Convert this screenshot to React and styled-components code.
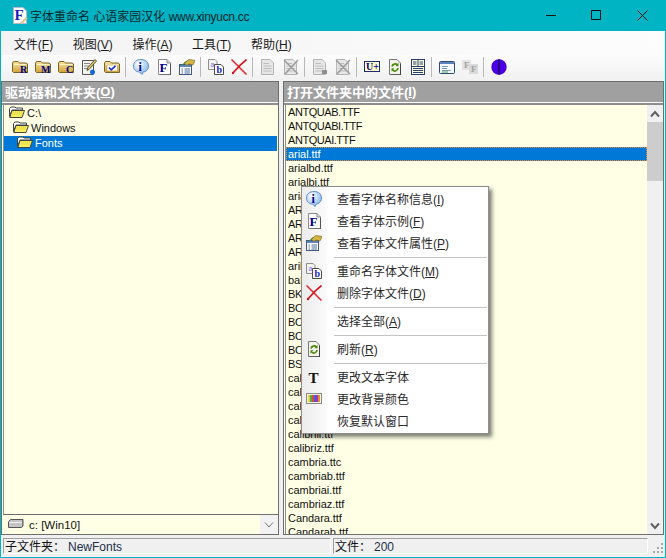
import React from 'react'
import styled, { createGlobalStyle } from 'styled-components'

const FONT = '"Liberation Sans", "Noto Sans CJK SC", sans-serif'

const GlobalStyle = createGlobalStyle`
  html, body {
    margin: 0;
    padding: 0;
    overflow: hidden;
    background: #fff;
  }
`

const Win = styled.div`
  box-sizing: border-box;
  width: 666px;
  height: 558px;
  position: relative;
  display: flex;
  flex-direction: column;
  border: 1px solid #00b4c3;
  border-top: 0;
  background: #f0f0f0;
  font-family: ${FONT};
  font-size: 11px;
  color: #111;
  overflow: hidden;
`

const TitleBar = styled.div`
  flex: 0 0 31px;
  display: flex;
  align-items: center;
  background: #00b4c3;
  padding-left: 10px;
  font-size: 12px;
  color: #06262c;
`

const TitleText = styled.span`
  margin-left: 1px;
  white-space: pre;
`

const TitleUrl = styled.span`
  letter-spacing: -0.3px;
`

const WinButtons = styled.div`
  margin-left: auto;
  display: flex;
  align-self: stretch;
`

const WinButton = styled.div`
  width: 45.5px;
  display: flex;
  align-items: center;
  justify-content: center;
`

const MenuBar = styled.div`
  flex: 0 0 24px;
  display: flex;
  align-items: center;
  padding-left: 3px;
  font-size: 12px;
  background: linear-gradient(90deg, #f3f3f3, #fdfdfd);
`

const MenuName = styled.div`
  padding: 0 9.8px;
  color: #1a1a1a;
`

const Key = styled.span`
  text-decoration: underline;
  text-underline-offset: 1px;
`

const ToolBar = styled.div`
  flex: 0 0 26px;
  display: flex;
  align-items: center;
  padding: 0 0 2px 7px;
  box-sizing: border-box;
  background: linear-gradient(180deg, #fcfcfc, #f1f1f1);
`

const ToolButton = styled.div`
  width: 23px;
  display: flex;
  justify-content: center;
`

const ToolSep = styled.div`
  width: 1px;
  height: 20px;
  margin: 0 3px 0 2px;
  background: #b8b8b8;
`

const Panes = styled.div`
  flex: 1;
  min-height: 0;
  display: grid;
  grid-template-columns: 278px 381px;
  grid-template-rows: minmax(0, 1fr);
  column-gap: 4px;
`

const Pane = styled.div`
  min-height: 0;
  display: flex;
  flex-direction: column;
  border: 1px solid #6e6e6e;
  background: #fff;
`

const PaneHead = styled.div`
  flex: 0 0 20px;
  box-sizing: border-box;
  display: flex;
  align-items: center;
  padding: 0 0 1px 3px;
  background: #a0a0a0;
  color: #fff;
  font-size: 13px;
  font-weight: 700;
`

const HeadRule = styled.div`
  flex: 0 0 2px;
  margin-top: 1px;
  background: #8c8c8c;
`

const Tree = styled.div`
  flex: 1;
  min-height: 0;
  padding-top: 1px;
  margin-left: 1px;
  border-left: 1px solid #8c8c8c;
  border-bottom: 1px solid #6e6e6e;
  background: #ffffe6;
`

const TreeRow = styled.div`
  box-sizing: border-box;
  height: 15px;
  display: flex;
  align-items: center;
  gap: 2px;
  margin-right: 1px;
  padding: 0 0 1px ${({ $depth }) => 5 + $depth * 4}px;
  background: ${({ $active }) => ($active ? '#0078d7' : 'transparent')};
  color: ${({ $active }) => ($active ? '#fff' : '#111')};
`

const Combo = styled.div`
  flex: 0 0 19px;
  display: flex;
  align-items: center;
  background: #ffffe6;
  font-size: 11.5px;
`

const ComboValue = styled.div`
  flex: 1;
  display: flex;
  align-items: center;
  gap: 5px;
  padding-left: 6px;
`

const ComboArrow = styled.div`
  flex: 0 0 18px;
  align-self: stretch;
  display: flex;
  align-items: center;
  justify-content: center;
  background: #f2f2f2;
`

const FileArea = styled.div`
  flex: 1;
  min-height: 0;
  display: flex;
  overflow: hidden;
`

const FileList = styled.div`
  flex: 1;
  min-width: 0;
  overflow: hidden;
  margin-left: 1px;
  border-left: 1px solid #8c8c8c;
  background: #ffffe6;
`

const FileRow = styled.div`
  box-sizing: border-box;
  height: 14px;
  line-height: 14px;
  padding-left: 2px;
  white-space: nowrap;
  letter-spacing: ${({ $caps }) => ($caps ? '-0.45px' : '-0.05px')};
  ${({ $active }) =>
    $active
      ? `background: #0078d7; color: #fff; outline: 1px dotted #ff8a1c; outline-offset: -1px;`
      : ''}
`

const ScrollBar = styled.div`
  flex: 0 0 16px;
  display: flex;
  flex-direction: column;
  background: #f0f0f0;
`

const ScrollButton = styled.div`
  flex: 0 0 17px;
  display: flex;
  align-items: center;
  justify-content: center;
`

const ScrollThumb = styled.div`
  flex: 0 0 59px;
  background: #cdcdcd;
`

const ScrollTrack = styled.div`
  flex: 1;
`

const StatusBar = styled.div`
  flex: 0 0 22px;
  min-height: 0;
  display: flex;
  gap: 2px;
  box-sizing: border-box;
  padding: 3px 0 3px 2px;
  font-size: 12px;
  line-height: 11px;
`

const StatusCell = styled.div`
  box-sizing: border-box;
  width: ${({ $width }) => $width}px;
  display: flex;
  align-items: center;
  padding: 2px 0 0 1px;
  border-top: 1px solid #a0a0a0;
  border-left: 1px solid #a0a0a0;
  border-bottom: 1px solid #fff;
  border-right: 1px solid #fff;
`

const StatusLabel = styled.span`
  width: ${({ $width }) => $width}px;
`

const StatusValue = styled.span`
  color: #1c2f4a;
`

const Grip = styled.div`
  margin-left: auto;
  align-self: flex-end;
  display: flex;
`

const ContextMenu = styled.div`
  position: absolute;
  top: 186px;
  left: 300px;
  box-sizing: border-box;
  width: 188px;
  height: 248px;
  border: 1px solid #8d8d8d;
  background: linear-gradient(90deg, #ececec, #fbfbfb 25px, #fff 25px);
  box-shadow: 3px 3px 4px rgba(0, 0, 0, 0.5);
  font-size: 12px;
  color: #2a2a2a;
`

const MenuRow = styled.div`
  height: 22px;
  display: flex;
  align-items: center;
`

const MenuIcon = styled.div`
  flex: 0 0 16px;
  height: 16px;
  margin: 2px 15px 0 4px;
`

const MenuRule = styled.div`
  height: 1px;
  margin: 4px 1px 1px 32px;
  background: #c4c4c4;
`

const Svg = ({ w = 16, h = 16, children }) => (
  <svg width={w} height={h} viewBox={`0 0 ${w} ${h}`} style={{ display: 'block', flex: 'none' }}>
    {children}
  </svg>
)

const Letter = ({ x, y, size = 9, fill = '#00008b', children }) => (
  <text x={x} y={y} fontFamily='"Liberation Serif", serif' fontWeight="700" fontSize={size} fill={fill}>
    {children}
  </text>
)

const goldFolder = (
  <>
    <defs>
      <linearGradient id="gold" x1="0" y1="0" x2="0" y2="1">
        <stop offset="0" stopColor="#f8e4a0" />
        <stop offset="1" stopColor="#cfa33c" />
      </linearGradient>
    </defs>
    <path d="M0.5 4 L1.5 2.5 H6 L7.5 4 H14 L15.5 5 V13.5 H1.5 L0.5 12.5 Z" fill="url(#gold)" stroke="#7a6426" />
    <path d="M2 5.5 H14" stroke="#fff4c8" />
  </>
)

const FolderLetter = ({ ch }) => (
  <Svg>
    {goldFolder}
    <Letter x={ch === 'M' ? 6 : 8} y={14} size={10}>{ch}</Letter>
  </Svg>
)

const EditIcon = () => (
  <Svg>
    <path d="M1.5 1.5 H12.5 V15.5 H1.5 Z" fill="#f4f4ee" stroke="#555" />
    <path d="M3 4.5 H9 M3 7 H8 M3 9.5 H7" stroke="#888" />
    <path d="M14 0.5 L15.5 2 L8 10.5 L6 11.5 L6.5 9 Z" fill="#e9c65a" stroke="#333" strokeWidth="0.8" />
    <circle cx="11.5" cy="13" r="2.5" fill="#1569d8" />
  </Svg>
)

const CheckFolder = () => (
  <Svg>
    {goldFolder}
    <rect x="3" y="6" width="10.5" height="6" fill="#fff" stroke="#a88a30" strokeWidth="0.5" />
    <path d="M5 8.5 L7.2 10.8 L11.5 6.8" fill="none" stroke="#1a2fd0" strokeWidth="1.6" />
  </Svg>
)

const InfoIcon = () => (
  <Svg>
    <defs>
      <radialGradient id="bubble" cx="0.35" cy="0.3" r="0.8">
        <stop offset="0" stopColor="#ffffff" />
        <stop offset="1" stopColor="#7fb2e8" />
      </radialGradient>
    </defs>
    <path d="M8 0.5 C12.5 0.5 15.5 3 15.5 7 C15.5 11 12.5 13 10 13 L9 15.5 L6.5 13 C3.5 13 0.5 11 0.5 7 C0.5 3 3.5 0.5 8 0.5 Z" fill="url(#bubble)" stroke="#5d8fc8" />
    <Letter x={5.5} y={11.5} size={12}>i</Letter>
  </Svg>
)

const FontIcon = () => (
  <Svg>
    <path d="M2.5 0.5 H11 L14.5 4 V15.5 H2.5 Z" fill="#fff" stroke="#8a8a8a" />
    <path d="M11 0.5 V4 H14.5" fill="#ddd" stroke="#8a8a8a" />
    <path d="M14.5 5 V16 H4" fill="none" stroke="#555" />
    <Letter x={3.5} y={13} size={13}>F</Letter>
  </Svg>
)

const PropsIcon = () => (
  <Svg>
    <rect x="0.5" y="5.5" width="12" height="10" fill="#fff" stroke="#405a80" />
    <rect x="1" y="6" width="11" height="2" fill="#5d84b8" />
    <path d="M2.5 10 H4 M5.5 10 H11 M2.5 12 H4 M5.5 12 H11 M2.5 14 H4 M5.5 14 H11" stroke="#4a6d9c" />
    <path d="M5 4 L10 0.5 L16 1.5 L14 6 L10 5 L8 6.5 Z" fill="#d8b440" stroke="#7b6a20" strokeWidth="0.7" />
    <path d="M3 6 L7.5 2.5" stroke="#3f8a3a" />
  </Svg>
)

const CopyIcon = () => (
  <Svg>
    <path d="M0.5 0.5 H7 L9 2.5 V10.5 H0.5 Z" fill="#f2f2f2" stroke="#8d8d8d" />
    <text x="2.5" y="7.5" fontFamily={FONT} fontSize="7" fill="#7a6ce0">a</text>
    <path d="M6.5 5.5 H13 L15.5 8 V15.5 H6.5 Z" fill="#fff" stroke="#4c4c4c" />
    <Letter x={8.5} y={14} size={10} fill="#1414d0">b</Letter>
  </Svg>
)

const DeleteIcon = () => (
  <Svg>
    <path d="M0.5 0.5 C5 5 10 10 15.5 15.5" stroke="#e0242a" strokeWidth="1.5" fill="none" />
    <path d="M15.5 0.5 C11 4 6 9 2 14" stroke="#d8141c" strokeWidth="1.6" fill="none" />
    <circle cx="2" cy="14" r="1.2" fill="#c8141c" />
  </Svg>
)

const GreyDoc = ({ cross, corner }) => (
  <Svg>
    <path d="M1.5 0.5 H10 L13.5 4 V15.5 H1.5 Z" fill="#e6e6e6" stroke="#b4b4b4" />
    <path d="M3.5 4.5 H9 M3.5 7 H11.5 M3.5 9.5 H11.5 M3.5 12 H11.5" stroke="#bdbdbd" />
    {cross && <path d="M1 1 L15 15 M15 1 L2 15" stroke="#9a9a9a" strokeWidth="1.4" />}
    {corner && <rect x="10" y="11" width="5" height="4" fill="#8d8d8d" />}
  </Svg>
)

const UnicodeIcon = () => (
  <Svg>
    <rect x="0.5" y="2.5" width="15" height="10" fill="#ffffc8" stroke="#1c2c70" />
    <Letter x={2} y={11} size={10}>U+</Letter>
  </Svg>
)

const RefreshIcon = () => (
  <Svg>
    <path d="M2.5 0.5 H10 L13.5 4 V15.5 H2.5 Z" fill="#f4f4ea" stroke="#777" />
    <path d="M13.5 5 V16 H4" fill="none" stroke="#444" />
    <path d="M5 7.5 A3.2 3.2 0 0 1 10.5 6 M11 9 A3.2 3.2 0 0 1 5.5 11" fill="none" stroke="#4c8a12" strokeWidth="1.7" />
    <path d="M11.5 3.8 V7.2 H8.5 Z M4.5 12.6 V9.2 H7.5 Z" fill="#4c8a12" />
  </Svg>
)

const LayoutIcon = () => (
  <Svg>
    <rect x="1.5" y="0.5" width="13" height="15" fill="#ffffe0" stroke="#24406e" />
    <path d="M8 1 V7 M1.5 7.5 H14.5 M3 3 H6.5 M3 5 H6.5 M9.5 3 H13 M9.5 5 H13 M3 9.5 H13 M3 11.5 H13 M3 13.5 H13" stroke="#24406e" />
  </Svg>
)

const WindowIcon = () => (
  <Svg>
    <rect x="0.5" y="2.5" width="15" height="12" rx="1" fill="#f4f8fc" stroke="#2c4a78" />
    <rect x="1" y="3" width="14" height="2" fill="#5d84b8" />
    <path d="M3 7.5 H9 M3 9.5 H8 M3 11.5 H12" stroke="#7e98b8" />
    <path d="M3 13 H9" stroke="#4f9e4f" />
  </Svg>
)

const PairIcon = () => (
  <Svg>
    <rect x="0" y="1" width="9" height="10" fill="#e4e4e4" />
    <rect x="7" y="5" width="9" height="10" fill="#dadada" />
    <Letter x={2} y={9} size={9} fill="#a0a0a0">F</Letter>
    <Letter x={9} y={13} size={9} fill="#a0a0a0">F</Letter>
  </Svg>
)

const CircleIcon = () => (
  <Svg>
    <circle cx="8" cy="8" r="7.7" fill="#4a00e0" />
    <rect x="7.5" y="0" width="1" height="16" fill="#000030" />
  </Svg>
)

const TextIcon = () => (
  <Svg>
    <Letter x={2.5} y={13.5} size={15} fill="#111">T</Letter>
  </Svg>
)

const PaletteIcon = () => (
  <Svg>
    <rect x="0.5" y="2.5" width="15" height="10" fill="#f4f4d8" stroke="#8a8a8a" />
    <rect x="2" y="4" width="2" height="7" fill="#e8d040" />
    <rect x="4" y="4" width="2" height="7" fill="#50a850" />
    <rect x="6" y="4" width="2" height="7" fill="#e04848" />
    <rect x="8" y="4" width="2" height="7" fill="#4858d8" />
    <rect x="10" y="4" width="2" height="7" fill="#9838b8" />
    <rect x="12" y="4" width="2" height="7" fill="#e89030" />
  </Svg>
)

const OpenFolder = () => (
  <Svg>
    <path d="M0.5 3.5 L2 2 H6 L7 3 H13.5 V5 H3 L0.5 11.5 Z" fill="#fff" stroke="#444" />
    <path d="M3 5.5 H15.5 L13 12.5 H0.8 Z" fill="#f7ef5c" stroke="#444" />
    <path d="M4 7 H13 M3.5 9 H12.5" stroke="#cfc22c" strokeDasharray="1 1" />
  </Svg>
)

const DriveIcon = () => (
  <Svg>
    <path d="M0.5 5 L2.5 2.5 H15 V8.5 L13.5 10.5 H0.5 Z" fill="#c4c4c4" stroke="#555" />
    <path d="M1 5.5 H14.5" stroke="#f0f0f0" />
    <path d="M14.5 3 V10" stroke="#777" />
  </Svg>
)

const Chevron = ({ up, color = '#606060', weight = 2 }) => (
  <Svg w={10} h={8}>
    <path d={up ? 'M1 6.5 L5 2 L9 6.5' : 'M1 1.5 L5 6 L9 1.5'} fill="none" stroke={color} strokeWidth={weight} />
  </Svg>
)

const AppLogo = () => (
  <Svg w={18} h={18}>
    <path d="M2.5 0.5 H12 L15.5 4 V16.5 H2.5 Z" fill="#fff" stroke="#b8b8c8" />
    <Letter x={3.5} y={13} size={15} fill="#1e1ebe">F</Letter>
    <path d="M9 16 L15 10 L16.5 11.5 L11 17 Z" fill="#d8c890" />
  </Svg>
)

const toolbar = [
  <FolderLetter ch="R" />, <FolderLetter ch="M" />, <FolderLetter ch="C" />, <EditIcon />, <CheckFolder />,
  null,
  <InfoIcon />, <FontIcon />, <PropsIcon />,
  null,
  <CopyIcon />, <DeleteIcon />,
  null,
  <GreyDoc />, <GreyDoc cross />,
  null,
  <GreyDoc corner />, <GreyDoc cross />,
  null,
  <UnicodeIcon />, <RefreshIcon />, <LayoutIcon />,
  null,
  <WindowIcon />, <PairIcon />,
  null,
  <CircleIcon />,
]

const menus = [['文件', 'F'], ['视图', 'V'], ['操作', 'A'], ['工具', 'T'], ['帮助', 'H']]

const files = [
  'ANTQUAB.TTF', 'ANTQUABI.TTF', 'ANTQUAI.TTF', 'arial.ttf', 'arialbd.ttf', 'arialbi.ttf', 'ariali.ttf',
  'ARIALN.TTF', 'ARIALNB.TTF', 'ARIALNBI.TTF', 'ARIALNI.TTF', 'ariblk.ttf', 'bahnschrift.ttf', 'BKANT.TTF',
  'BOOKOS.TTF', 'BOOKOSB.TTF', 'BOOKOSBI.TTF', 'BOOKOSI.TTF', 'BSSYM7.TTF', 'calibri.ttf', 'calibrib.ttf',
  'calibrii.ttf', 'calibril.ttf', 'calibrili.ttf', 'calibriz.ttf', 'cambria.ttc', 'cambriab.ttf',
  'cambriai.ttf', 'cambriaz.ttf', 'Candara.ttf', 'Candarab.ttf',
]

const contextItems = [
  { icon: <InfoIcon />, label: '查看字体名称信息', key: 'I' },
  { icon: <FontIcon />, label: '查看字体示例', key: 'F' },
  { icon: <PropsIcon />, label: '查看字体文件属性', key: 'P' },
  null,
  { icon: <CopyIcon />, label: '重命名字体文件', key: 'M' },
  { icon: <DeleteIcon />, label: '删除字体文件', key: 'D' },
  null,
  { label: '选择全部', key: 'A' },
  null,
  { icon: <RefreshIcon />, label: '刷新', key: 'R' },
  null,
  { icon: <TextIcon />, label: '更改文本字体' },
  { icon: <PaletteIcon />, label: '更改背景颜色' },
  { label: '恢复默认窗口' },
]

const Hotkey = ({ k }) => (
  <>
    (<Key>{k}</Key>)
  </>
)

export default function App() {
  return (
    <>
      <GlobalStyle />
      <Win>
        <TitleBar>
          <AppLogo />
          <TitleText>字体重命名 心语家园汉化 <TitleUrl>www.xinyucn.cc</TitleUrl></TitleText>
          <WinButtons>
            <WinButton>
              <Svg w={11} h={11}><path d="M0 5.5 H10" stroke="#111" /></Svg>
            </WinButton>
            <WinButton>
              <Svg w={11} h={11}><rect x="0.5" y="0.5" width="9" height="9" fill="none" stroke="#111" /></Svg>
            </WinButton>
            <WinButton>
              <Svg w={11} h={11}><path d="M0.5 0.5 L10.5 10.5 M10.5 0.5 L0.5 10.5" stroke="#111" /></Svg>
            </WinButton>
          </WinButtons>
        </TitleBar>

        <MenuBar>
          {menus.map(([name, k]) => (
            <MenuName key={k}>{name}<Hotkey k={k} /></MenuName>
          ))}
        </MenuBar>

        <ToolBar>
          {toolbar.map((icon, i) =>
            icon ? <ToolButton key={i}>{icon}</ToolButton> : <ToolSep key={i} />
          )}
        </ToolBar>

        <Panes>
          <Pane>
            <PaneHead>驱动器和文件夹<Hotkey k="O" /></PaneHead>
            <HeadRule />
            <Tree>
              <TreeRow $depth={0}><OpenFolder />C:\</TreeRow>
              <TreeRow $depth={1}><OpenFolder />Windows</TreeRow>
              <TreeRow $depth={2} $active><OpenFolder />Fonts</TreeRow>
            </Tree>
            <Combo>
              <ComboValue><DriveIcon />c: [Win10]</ComboValue>
              <ComboArrow><Chevron color="#777" weight={1} /></ComboArrow>
            </Combo>
          </Pane>

          <Pane>
            <PaneHead>打开文件夹中的文件<Hotkey k="I" /></PaneHead>
            <HeadRule />
            <FileArea>
              <FileList>
                {files.map((f) => (
                  <FileRow key={f} $caps={f === f.toUpperCase()} $active={f === 'arial.ttf'}>{f}</FileRow>
                ))}
              </FileList>
              <ScrollBar>
                <ScrollButton><Chevron up /></ScrollButton>
                <ScrollThumb />
                <ScrollTrack />
                <ScrollButton><Chevron /></ScrollButton>
              </ScrollBar>
            </FileArea>
          </Pane>
        </Panes>

        <StatusBar>
          <StatusCell $width={328}>
            <StatusLabel $width={63}>子文件夹：</StatusLabel>
            <StatusValue>NewFonts</StatusValue>
          </StatusCell>
          <StatusCell $width={315}>
            <StatusLabel $width={39}>文件：</StatusLabel>
            <StatusValue>200</StatusValue>
          </StatusCell>
          <Grip>
            <Svg w={13} h={12}>
              <path d="M9 1 h2 v2 h-2 Z M5 5 h2 v2 h-2 Z M9 5 h2 v2 h-2 Z M1 9 h2 v2 h-2 Z M5 9 h2 v2 h-2 Z M9 9 h2 v2 h-2 Z" fill="#a8a8a8" />
            </Svg>
          </Grip>
        </StatusBar>

        <ContextMenu>
          {contextItems.map((item, i) =>
            item ? (
              <MenuRow key={i}>
                <MenuIcon>{item.icon}</MenuIcon>
                <span>{item.label}{item.key && <Hotkey k={item.key} />}</span>
              </MenuRow>
            ) : (
              <MenuRule key={i} />
            )
          )}
        </ContextMenu>
      </Win>
    </>
  )
}
